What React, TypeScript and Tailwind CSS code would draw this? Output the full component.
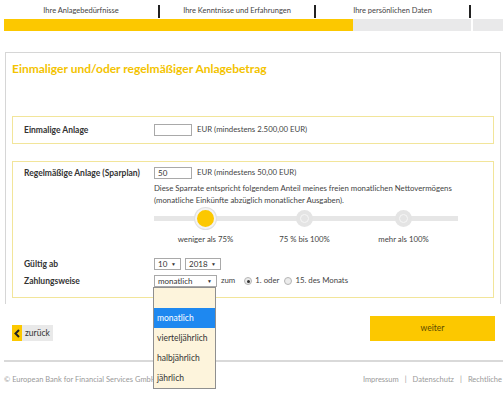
import React from 'react';

const font = { fontFamily: 'Lato, "Open Sans", sans-serif' };

const Sep = () => <div className="mb-[1px] h-[13px] w-[2px] bg-[#222]" />;

const Thumb = ({ active }: { active?: boolean }) =>
  active ? (
    <div className="h-[21px] w-[21px] rounded-full border-2 border-[#f3f3f3] bg-[#fcc800] shadow-[0_0_0_1px_#e0e0e0]" />
  ) : (
    <div className="flex h-[17px] w-[17px] items-center justify-center rounded-full bg-[#e4e4e4]">
      <div className="h-[9px] w-[9px] rounded-full border border-[#f6f6f6] bg-[#e4e4e4]" />
    </div>
  );

const Select = ({ value, w }: { value: string; w: string }) => (
  <div className={`flex h-[12px] items-center justify-between border border-[#a9a9a9] bg-white pl-[3px] pr-[4px] text-[8px] leading-none text-[#333] ${w}`}>
    <span>{value}</span>
    <span className="text-[5px]">▼</span>
  </div>
);

const Radio = ({ checked }: { checked?: boolean }) => (
  <div className="flex h-[8px] w-[8px] items-center justify-center rounded-full border border-[#b5b5b5] bg-[#ececec]">
    {checked && <div className="h-[3px] w-[3px] rounded-full bg-[#333]" />}
  </div>
);

export default function App() {
  return (
    <div className="relative h-[400px] w-[503px] overflow-hidden bg-white text-[#444]" style={font}>
      {/* steps */}
      <div className="flex h-[19px] pl-[4px] text-[7.5px] text-[#444]">
        <div className="flex w-[156px] items-end">
          <span className="flex-1 self-center pt-[3px] text-center">Ihre Anlagebedürfnisse</span>
          <Sep />
        </div>
        <div className="flex w-[156px] items-end">
          <span className="flex-1 self-center pt-[3px] text-center">Ihre Kenntnisse und Erfahrungen</span>
          <Sep />
        </div>
        <div className="flex w-[155px] items-end">
          <span className="flex-1 self-center pt-[3px] text-center">Ihre persönlichen Daten</span>
          <Sep />
        </div>
      </div>
      <div className="flex h-[12px] pl-[4px]">
        <div className="w-[349px] bg-[#fcc800]" />
        <div className="w-[118px] bg-[#e9e9ea]" />
        <div className="w-[2px]" />
        <div className="flex-1 bg-[#e9e9ea]" />
      </div>

      {/* panel */}
      <div className="ml-[5px] mt-[21px] w-[496px] border-x border-t border-[#d6d6d6] pb-[6px] pt-[8px]">
        <h1 className="pl-[6px] text-[12px] font-bold leading-[16px] text-[#f3c300]">
          Einmaliger und/oder regelmäßiger Anlagebetrag
        </h1>

        <div className="mx-[6px] mt-[39px] flex h-[28px] items-center border border-[#f2e59a] pl-[11px] text-[7.8px]">
          <span className="w-[130px] text-[8.5px] font-bold text-[#333]">Einmalige Anlage</span>
          <div className="h-[12px] w-[38px] border border-[#a9a9a9] bg-white" />
          <span className="ml-[5px]">EUR (mindestens 2.500,00 EUR)</span>
        </div>

        <div className="mx-[6px] mt-[17px] h-[137px] border border-[#f2e59a] pl-[11px] pt-[5px] text-[7.8px]">
          <div className="flex h-[12px] items-center">
            <span className="w-[130px] text-[8.5px] font-bold text-[#333]">Regelmäßige Anlage (Sparplan)</span>
            <div className="flex h-[12px] w-[38px] items-center border border-[#a9a9a9] bg-white pl-[3px] text-[8px] text-[#333]">50</div>
            <span className="ml-[5px]">EUR (mindestens 50,00 EUR)</span>
          </div>
          <div className="ml-[130px] mt-[3px] leading-[12px]">
            <p>Diese Sparrate entspricht folgendem Anteil meines freien monatlichen Nettovermögens</p>
            <p>(monatliche Einkünfte abzüglich monatlicher Ausgaben).</p>
          </div>
          <div className="relative ml-[130px] mt-[2px] h-[21px] w-[304px]">
            <div className="absolute left-0 right-0 top-[8px] h-[5px] bg-[#e6e6e6]" />
            <div className="relative grid h-full w-[297px] translate-x-[2px] grid-cols-3 place-items-center">
              <Thumb active />
              <Thumb />
              <Thumb />
            </div>
          </div>
          <div className="ml-[132px] mt-[4px] grid w-[297px] grid-cols-3 text-center leading-[12px]">
            <span>weniger als 75%</span>
            <span>75 % bis 100%</span>
            <span>mehr als 100%</span>
          </div>
          <div className="mt-[13px] flex h-[12px] items-center">
            <span className="w-[130px] text-[8.5px] font-bold text-[#333]">Gültig ab</span>
            <Select value="10" w="w-[27px]" />
            <div className="w-[4px]" />
            <Select value="2018" w="w-[36px]" />
          </div>
          <div className="mt-[5px] flex h-[12px] items-center">
            <span className="w-[130px] text-[8.5px] font-bold text-[#333]">Zahlungsweise</span>
            <Select value="monatlich" w="w-[63px]" />
            <span className="ml-[4px]">zum</span>
            <div className="ml-[9px]"><Radio checked /></div>
            <span className="ml-[3px]">1. oder</span>
            <div className="ml-[5px]"><Radio /></div>
            <span className="ml-[3px]">15. des Monats</span>
          </div>
        </div>
      </div>

      {/* buttons */}
      <div className="mt-[12px] flex items-end pl-[12px] pr-[8px]">
        <div className="flex h-[16px] items-stretch text-[8.5px]">
          <div className="flex w-[10px] items-center justify-center bg-[#fcc800]">
            <svg width="6" height="9" viewBox="0 0 6 9">
              <path d="M5 1L1.5 4.5L5 8" fill="none" stroke="#222" strokeWidth="2" />
            </svg>
          </div>
          <div className="flex items-center bg-[#e9e9e9] px-[3px] text-[#333]">zurück</div>
        </div>
        <div className="ml-auto flex h-[25px] w-[125px] items-center justify-center bg-[#fcc800] text-[8.5px] text-[#5c4a00]">
          weiter
        </div>
      </div>

      {/* footer */}
      <div className="ml-[4px] mt-[19px] h-[2px] bg-[#d9d9d9]" />
      <div className="mt-[12px] flex whitespace-nowrap pl-[4px] text-[7.5px] text-[#9a9a9a]">
        <span>© European Bank for Financial Services GmbH</span>
        <span className="ml-auto flex gap-[6px] pr-[1px]">
          <span>Impressum</span><span>|</span><span>Datenschutz</span><span>|</span><span>Rechtliche</span>
        </span>
      </div>

      {/* open dropdown */}
      <div className="absolute left-[153px] top-[287px] w-[63px] border border-[#8f8f8f] bg-[#fdf4dc] text-[8.5px] leading-[20px] text-[#333]">
        <div className="h-[20px]" />
        <div className="bg-[#1e88f0] pl-[3px] text-white">monatlich</div>
        <div className="pl-[3px]">vierteljährlich</div>
        <div className="pl-[3px]">halbjährlich</div>
        <div className="pl-[3px]">jährlich</div>
      </div>
    </div>
  );
}
